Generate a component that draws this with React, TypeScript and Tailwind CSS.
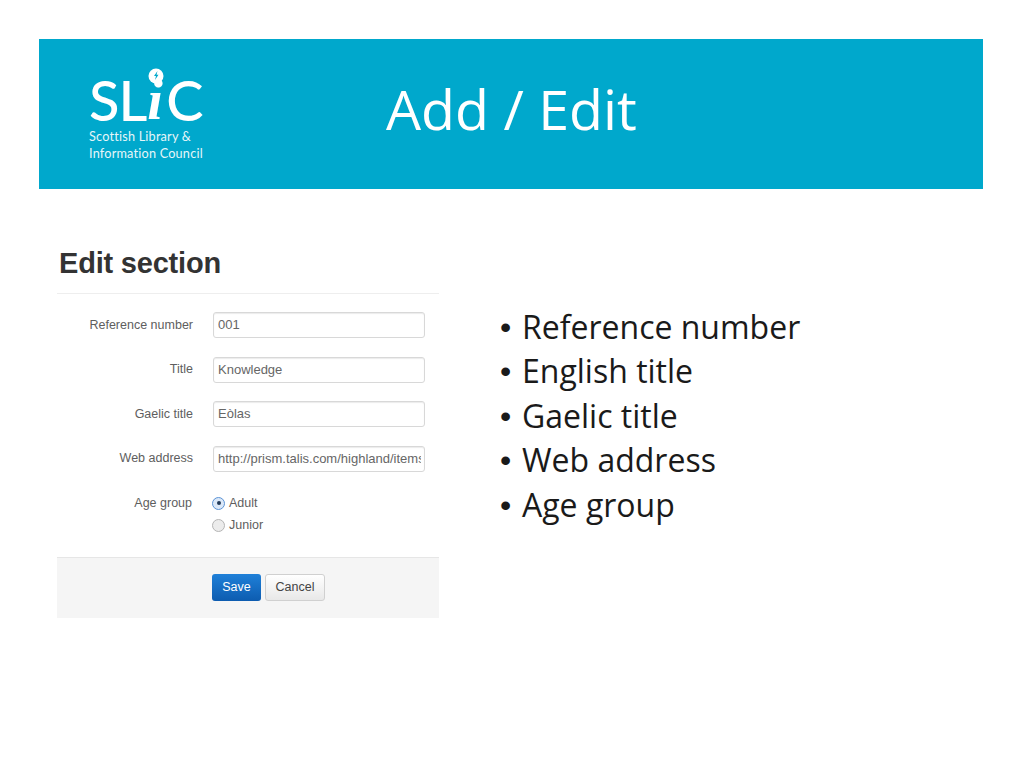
const fields = [
  { label: "Reference number", value: "001" },
  { label: "Title", value: "Knowledge" },
  { label: "Gaelic title", value: "Eòlas" },
  { label: "Web address", value: "http://prism.talis.com/highland/items" },
];

const bullets = ["Reference number", "English title", "Gaelic title", "Web address", "Age group"];

function Logo() {
  return (
    <div className="w-[120px] text-white font-['Lato',sans-serif]">
      <div className="relative pt-[8px] h-[56px] flex text-[56px] leading-[48px] font-medium tracking-[-1px]">
        <span>SL</span>
        <span className="italic font-['Liberation_Serif',serif] font-bold w-[19px] ml-[1px]">i</span>
        <span>C</span>
        <svg className="absolute left-[59px] top-0 w-[16px] h-[16px]" viewBox="0 0 16 16">
          <circle cx="8" cy="8" r="7.5" fill="#fff" />
          <path d="M9.5 3 L6 8 L8 8 L7 12 L10.5 6.8 L8.5 6.8 Z" fill="#00a8cc" />
        </svg>
      </div>
      <div className="text-[12.7px] leading-[17px] tracking-[0.2px] mt-[4px] whitespace-nowrap opacity-90">
        <div>Scottish Library &amp;</div>
        <div>Information Council</div>
      </div>
    </div>
  );
}

function Radio({ label, checked }: { label: string; checked?: boolean }) {
  return (
    <div className="h-[22px] flex items-center gap-[4px]">
      <span
        className={
          checked
            ? "w-[13px] h-[13px] rounded-full border border-[#5b93d6] bg-[#dbe8f8] flex items-center justify-center"
            : "w-[13px] h-[13px] rounded-full border border-[#b5b5b5] bg-[#ececec]"
        }
      >
        {checked && <span className="w-[4px] h-[4px] rounded-full bg-[#223a5a]" />}
      </span>
      <span>{label}</span>
    </div>
  );
}

export default function App() {
  return (
    <div className="w-[1024px] h-[768px] bg-white overflow-hidden pt-[39px] pl-[39px]">
      <header className="relative w-[944px] h-[150px] bg-[#00a8cc] pl-[50px] pt-[29px]">
        <Logo />
        <h1 className="absolute left-[347px] top-[35px] text-[55.5px] leading-[70px] text-white font-['Open_Sans',sans-serif] font-normal whitespace-nowrap">
          Add / Edit
        </h1>
      </header>

      <div className="flex mt-[56px]">
        <section className="w-[382px] ml-[18px] font-['Liberation_Sans',sans-serif] text-[#555]">
          <h2 className="ml-[2px] text-[29px] leading-[36px] font-bold text-[#333] tracking-[-0.2px]">Edit section</h2>
          <div className="h-px bg-[#eeeeee] mt-[12px]" />
          <div className="pt-[18px] flex flex-col gap-[18.5px]">
            {fields.map((f) => (
              <div key={f.label} className="flex items-center h-[26px] text-[12.5px]">
                <div className="w-[136px] text-right text-[#5e5e5e]">{f.label}</div>
                <div className="w-[212px] h-[26px] ml-[20px] pl-[4px] pr-[3px] flex items-center rounded-[3px] border border-[#d8d8d8] bg-white shadow-[inset_0_1px_1px_rgba(0,0,0,0.08)] text-[13px] text-[#666]">
                  <span className="block w-full overflow-hidden whitespace-nowrap">{f.value}</span>
                </div>
              </div>
            ))}
          </div>
          <div className="flex text-[12.5px] mt-[20.5px]">
            <div className="w-[135px] text-right text-[#5e5e5e] leading-[22px]">Age group</div>
            <div className="ml-[20px] text-[#5e5e5e]">
              <Radio label="Adult" checked />
              <Radio label="Junior" />
            </div>
          </div>
          <div className="mt-[21px] h-[61px] bg-[#f5f5f5] border-t border-[#e6e6e6] flex items-start pt-[16px] pl-[155px] gap-[4px] text-[12.5px]">
            <div className="w-[49px] h-[27px] rounded-[3px] bg-gradient-to-b from-[#1f80d8] to-[#0d5cb0] text-white flex items-center justify-center">
              Save
            </div>
            <div className="w-[60px] h-[27px] rounded-[3px] border border-[#d0d0d0] bg-gradient-to-b from-white to-[#e8e8e8] text-[#444] flex items-center justify-center">
              Cancel
            </div>
          </div>
        </section>

        <ul className="ml-[61px] mt-[60px] text-[32px] leading-[44.4px] text-[#1a1a1a] font-['Open_Sans',sans-serif] whitespace-nowrap">
          {bullets.map((b) => (
            <li key={b} className="flex">
              <span className="w-[22px] font-['Liberation_Sans',sans-serif]">•</span>
              <span>{b}</span>
            </li>
          ))}
        </ul>
      </div>
    </div>
  );
}
